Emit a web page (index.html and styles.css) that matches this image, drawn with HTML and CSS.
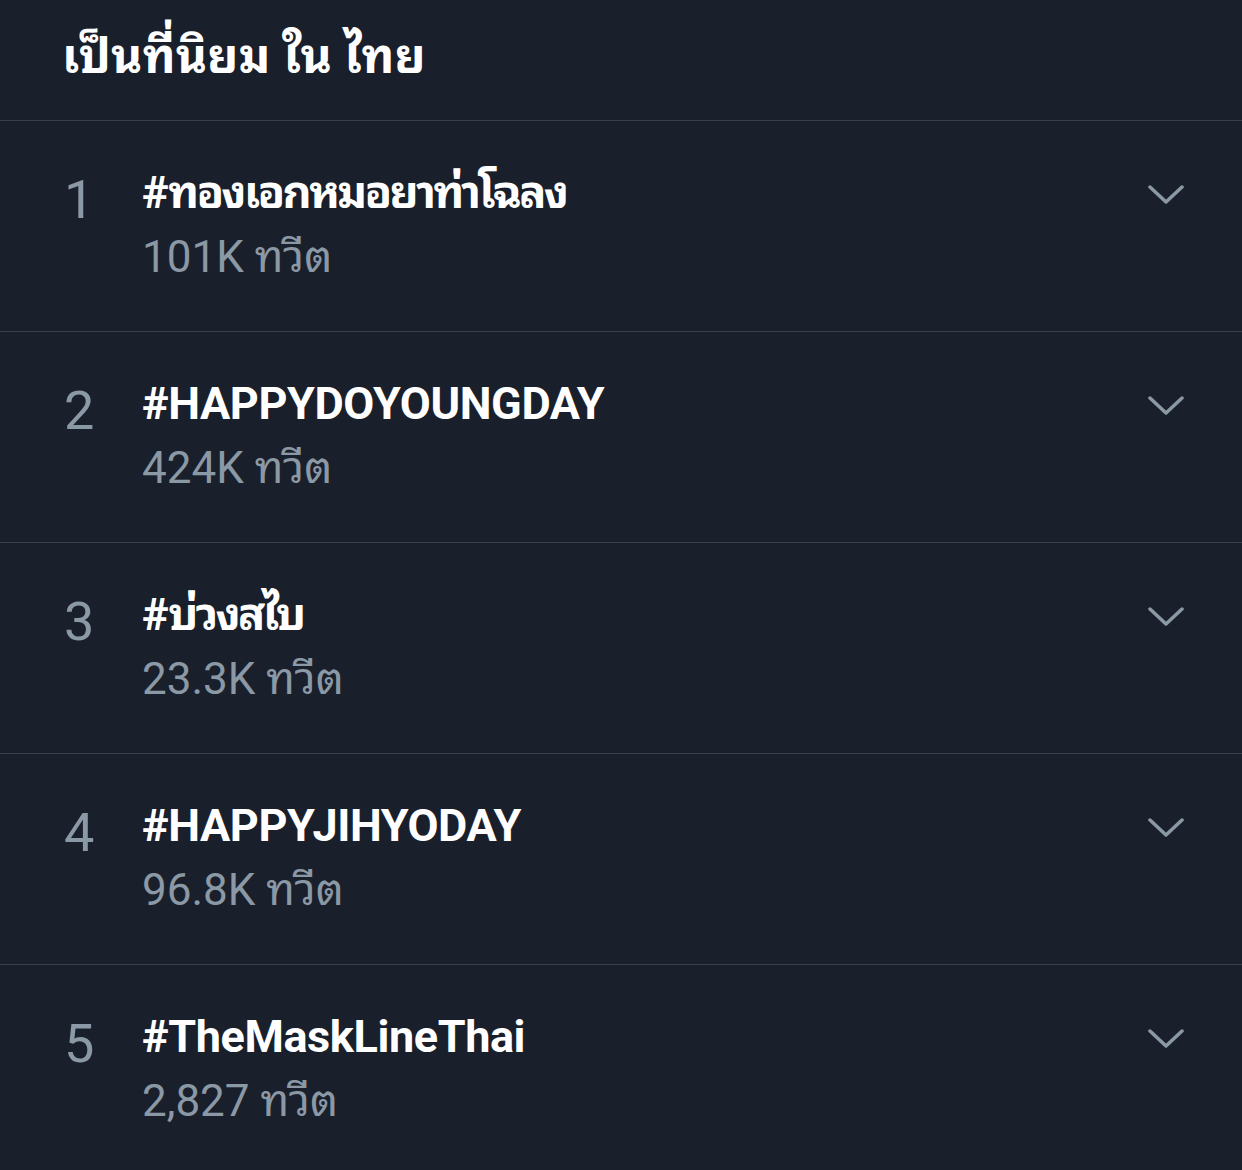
FILE: index.html
```html
<!DOCTYPE html>
<html lang="th">
<head>
<meta charset="utf-8">
<link rel="stylesheet" href="styles.css">
</head>
<body>
<div class="page">
  <header class="head">
    <h1 class="head-title">เป็นที่นิยม ใน ไทย</h1>
  </header>
  <ul class="list">
    <li class="row">
      <span class="rank">1</span>
      <div class="info">
        <div class="tag">#<span class="th">ทองเอกหมอยาท่าโฉลง</span></div>
        <div class="count">101K ทวีต</div>
      </div>
      <svg class="chev" viewBox="0 0 36 20"><path d="M2 2 L18 17 L34 2" /></svg>
    </li>
    <li class="row">
      <span class="rank">2</span>
      <div class="info">
        <div class="tag">#HAPPYDOYOUNGDAY</div>
        <div class="count">424K ทวีต</div>
      </div>
      <svg class="chev" viewBox="0 0 36 20"><path d="M2 2 L18 17 L34 2" /></svg>
    </li>
    <li class="row">
      <span class="rank">3</span>
      <div class="info">
        <div class="tag">#<span class="th">บ่วงสไบ</span></div>
        <div class="count">23.3K ทวีต</div>
      </div>
      <svg class="chev" viewBox="0 0 36 20"><path d="M2 2 L18 17 L34 2" /></svg>
    </li>
    <li class="row">
      <span class="rank">4</span>
      <div class="info">
        <div class="tag">#HAPPYJIHYODAY</div>
        <div class="count">96.8K ทวีต</div>
      </div>
      <svg class="chev" viewBox="0 0 36 20"><path d="M2 2 L18 17 L34 2" /></svg>
    </li>
    <li class="row">
      <span class="rank">5</span>
      <div class="info">
        <div class="tag">#TheMaskLineThai</div>
        <div class="count">2,827 ทวีต</div>
      </div>
      <svg class="chev" viewBox="0 0 36 20"><path d="M2 2 L18 17 L34 2" /></svg>
    </li>
  </ul>
</div>
</body>
</html>
```
FILE: styles.css
```css
html, body {
  margin: 0;
  padding: 0;
  background: #1a202b;
}
body {
  font-family: "Roboto", "Noto Sans Thai Looped", sans-serif;
  color: #ffffff;
  width: 1242px;
  height: 1170px;
  overflow: hidden;
}
.head {
  height: 121px;
  border-bottom: 1px solid #3a404a;
  box-sizing: border-box;
  padding-left: 62px;
  display: flex;
  align-items: flex-start;
}
.head-title {
  margin: 0;
  padding-top: 23px;
  font-size: 48px;
  line-height: 68px;
  font-weight: 700;
  letter-spacing: 0.2px;
}
.list {
  list-style: none;
  margin: 0;
  padding: 0;
}
.row {
  display: flex;
  align-items: flex-start;
  height: 211px;
  box-sizing: border-box;
  border-bottom: 1px solid #3a404a;
  padding: 40px 58px 0 62px;
}
.rank {
  width: 78px;
  padding-left: 2px;
  font-size: 54px;
  line-height: 64px;
  padding-top: 7px;
  color: #8b98a5;
  font-weight: 400;
}
.info {
  flex: 1;
}
.tag {
  font-size: 45px;
  line-height: 64px;
  font-weight: 700;
  letter-spacing: -0.4px;
  color: #ffffff;
}
.th {
  letter-spacing: -2.6px;
}
.count {
  font-size: 44px;
  line-height: 64px;
  color: #8b98a5;
}
.chev {
  width: 36px;
  height: 20px;
  margin-top: 24px;
  fill: none;
  stroke: #8b98a5;
  stroke-width: 3.5;
  stroke-linecap: round;
  stroke-linejoin: round;
}
```
